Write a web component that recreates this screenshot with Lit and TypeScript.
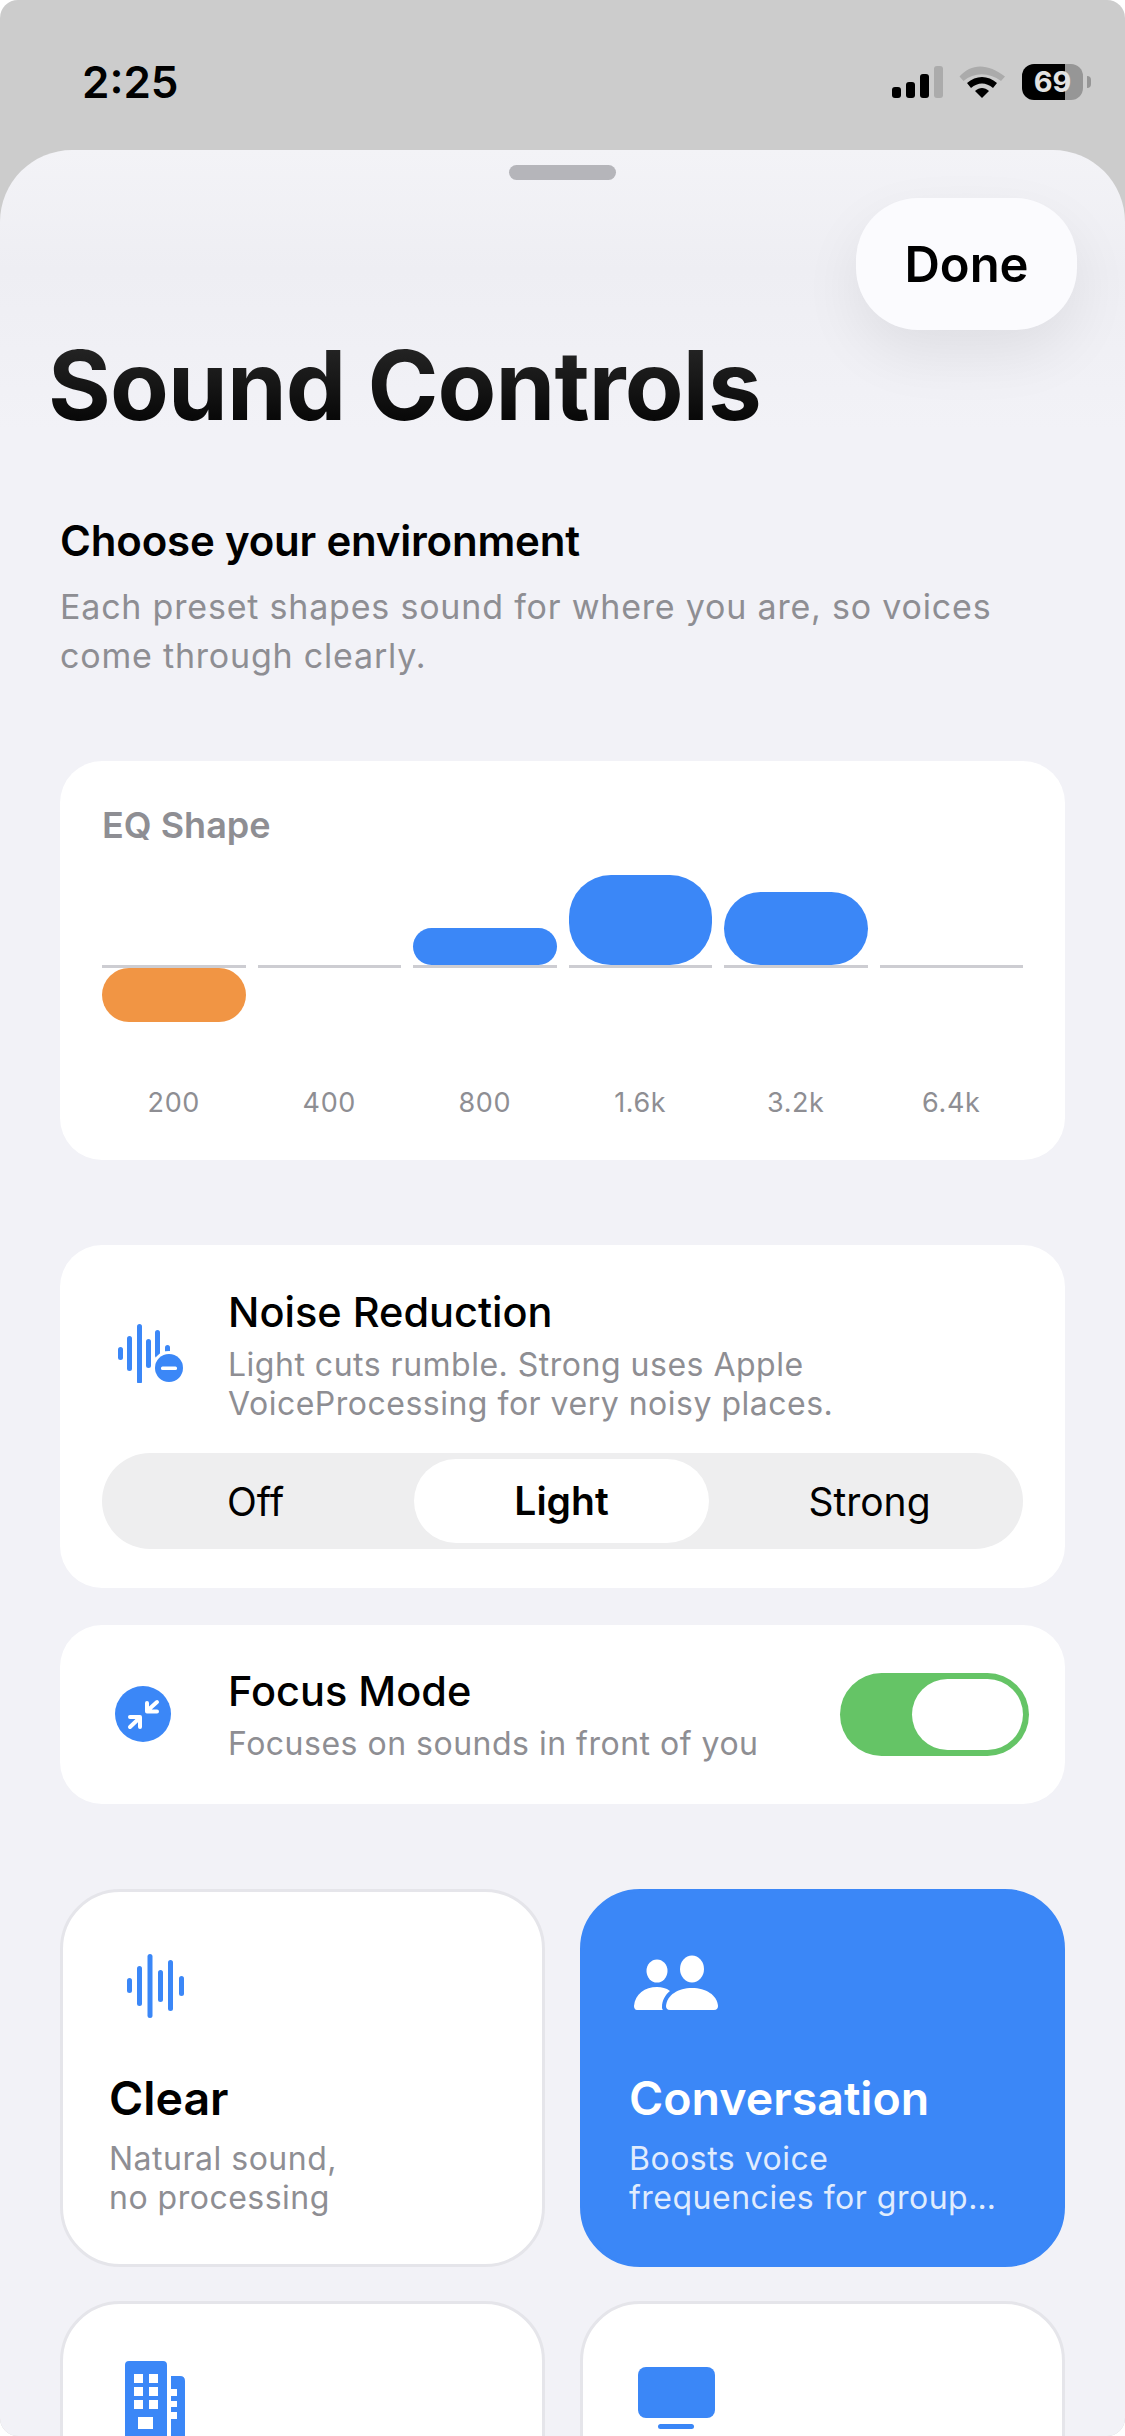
import { LitElement, html, css, svg } from "lit";
import { customElement } from "lit/decorators.js";

const EQ = [
  { label: "200", up: 0, down: 54 },
  { label: "400", up: 0, down: 0 },
  { label: "800", up: 37, down: 0 },
  { label: "1.6k", up: 90, down: 0 },
  { label: "3.2k", up: 73, down: 0 },
  { label: "6.4k", up: 0, down: 0 },
];
const bars = (list: number[][]) =>
  list.map(
    ([x, y1, y2]) => svg`<rect x=${x} y=${y1} width="5" height=${y2 - y1} rx="2.5" fill="#3b87f7"></rect>`
  );

@customElement("app-root")
export class AppRoot extends LitElement {
  static styles = css`
    :host { display: block; width: 1125px; height: 2436px; background: #fff; font-family: Inter, "Liberation Sans", sans-serif; color: #000; }
    .screen { width: 1125px; height: 2436px; border-radius: 18px; overflow: hidden; background: #cccccc; }
    .status { height: 150px; box-sizing: border-box; padding: 0 34px 0 82px; display: flex; justify-content: space-between; align-items: flex-start; }
    .time { font-size: 44px; line-height: 50px; font-weight: 600; margin-top: 57px; }
    .status-icons { display: flex; margin-top: 64px; }
    .batt { position: relative; width: 69px; height: 36px; margin-left: 16px; }
    .batt-body { width: 61px; height: 36px; border-radius: 12px; background: linear-gradient(90deg, #000 0 43px, #969696 43px); color: #e2e2e2; font-size: 29px; line-height: 36px; font-weight: 700; text-align: center; }
    .batt-nub { position: absolute; right: 0; top: 12px; width: 4px; height: 12px; border-radius: 0 6px 6px 0; background: #969696; }
    .sheet { position: relative; height: 2286px; box-sizing: border-box; background: linear-gradient(180deg, #f3f3f7 0, #eeeef3 120px, #f2f2f7 280px); border-radius: 72px 72px 0 0; padding: 15px 60px 0; }
    .handle { width: 107px; height: 15px; border-radius: 8px; background: #b5b5ba; margin: 0 auto; }
    .done { position: absolute; top: 48px; right: 48px; width: 221px; height: 132px; border-radius: 62px; background: #fbfbfe; box-shadow: 0 24px 60px rgba(0,0,0,.07); display: flex; align-items: center; justify-content: center; font-size: 49px; font-weight: 600; }
    h1 { margin: 149px 0 0 -12px; font-size: 96px; line-height: 112px; font-weight: 700; letter-spacing: -0.85px; background: linear-gradient(180deg, #2b2b2b, #000); -webkit-background-clip: text; background-clip: text; color: transparent; }
    .intro-title { margin-top: 75px; font-size: 42px; line-height: 50px; font-weight: 600; letter-spacing: -0.2px; }
    .intro { margin-top: 16px; font-size: 34px; line-height: 49px; color: #8e8e93; letter-spacing: 0.8px; }
    .card { background: #fff; border-radius: 42px; }
    .eq { margin-top: 81px; padding: 42px 42px 40px; height: 399px; box-sizing: border-box; }
    .eq-title { font-size: 36px; line-height: 44px; font-weight: 600; color: #8e8e93; }
    .eq-grid { display: grid; grid-template-columns: repeat(6, 1fr); gap: 0 12px; }
    .col { display: flex; flex-direction: column; align-items: stretch; }
    .up { height: 118px; display: flex; align-items: flex-end; }
    .down { height: 118px; }
    .line { height: 3px; background: #cdcdd2; }
    .bar { width: 100%; }
    .bar.pos { background: #3b87f7; }
    .bar.neg { background: #f19544; }
    .freq { font-size: 27px; line-height: 34px; color: #8e8e93; text-align: center; letter-spacing: .6px; }
    .noise { margin-top: 85px; height: 343px; box-sizing: border-box; padding: 42px 42px 0; }
    .row { display: flex; }
    .row-icon { width: 126px; flex: none; }
    .row-icon svg { display: block; }
    .row-title { font-size: 41.5px; line-height: 50px; font-weight: 500; }
    .row-sub { font-size: 32px; line-height: 39px; color: #8e8e93; letter-spacing: .5px; }
    .noise .row-sub { margin-top: 8px; }
    .seg { margin-top: 30px; height: 96px; border-radius: 48px; background: #eeeeef; display: grid; grid-template-columns: repeat(3, 1fr); box-sizing: border-box; align-items: center; text-align: center; font-size: 39px; }
    .seg .on { height: 84px; line-height: 84px; margin: 0 7px 0 5px; border-radius: 42px; background: #fff; font-weight: 600; }
    .focus { margin-top: 37px; height: 179px; box-sizing: border-box; padding: 41px 36px 0 42px; }
    .focus .row { align-items: flex-start; }
    .focus-text { flex: 1; }
    .focus .row-sub { margin-top: 8px; }
    .toggle { width: 189px; height: 83px; margin-top: 7px; border-radius: 42px; background: #65c466; padding: 6px; box-sizing: border-box; display: flex; justify-content: flex-end; }
    .knob { width: 111px; height: 71px; border-radius: 36px; background: #fff; }
    .presets { margin-top: 85px; display: grid; grid-template-columns: 485px 485px; gap: 34px 35px; }
    .preset { height: 378px; box-sizing: border-box; background: #fff; border: 3px solid #e5e5ea; border-radius: 60px; padding: 48px 46px 0; }
    .preset svg { display: block; }
    .preset.sel { background: #3b87f7; border-color: #3b87f7; color: #fff; }
    .p-title { margin-top: 38px; font-size: 46.5px; line-height: 56px; font-weight: 600; }
    .p-sub { margin-top: 13px; font-size: 32px; line-height: 39px; color: #8e8e93; letter-spacing: .5px; white-space: nowrap; }
    .sel .p-sub { color: rgba(255,255,255,.85); }
  `;

  render() {
    return html`<div class="screen">
      <div class="status">
        <div class="time">2:25</div>
        <div class="status-icons">
          <svg width="114" height="36" viewBox="0 0 114 36">
            <rect x="0" y="23" width="9" height="11" rx="3"></rect>
            <rect x="14" y="18" width="9" height="16" rx="3"></rect>
            <rect x="28" y="10" width="9" height="24" rx="3"></rect>
            <rect x="42" y="2" width="9" height="32" rx="3" fill="#ababab"></rect>
            <path d="M67.5 12.5C79 -1 96 -1 113 12.5L109 17C97 8 82 8 71.5 17Z" fill="#ababab"></path>
            <path d="M75 19C84 11 96 11 105 19L101 24C94 18 86 18 79 24Z"></path>
            <path d="M83 27C87.5 23 92.5 23 97 27L90 34Z"></path>
          </svg>
          <div class="batt"><div class="batt-body">69</div><div class="batt-nub"></div></div>
        </div>
      </div>
      <div class="sheet">
        <div class="handle"></div>
        <div class="done">Done</div>
        <h1>Sound Controls</h1>
        <div class="intro-title">Choose your environment</div>
        <div class="intro">Each preset shapes sound for where you are, so voices<br />come through clearly.</div>

        <div class="card eq">
          <div class="eq-title">EQ Shape</div>
          <div class="eq-grid">
            ${EQ.map(
              (b) => html`<div class="col">
                <div class="up">${b.up ? html`<div class="bar pos" style="height:${b.up}px;border-radius:${Math.min(b.up / 2, 42)}px"></div>` : ""}</div>
                <div class="line"></div>
                <div class="down">${b.down ? html`<div class="bar neg" style="height:${b.down}px;border-radius:${b.down / 2}px"></div>` : ""}</div>
                <div class="freq">${b.label}</div>
              </div>`
            )}
          </div>
        </div>

        <div class="card noise">
          <div class="row">
            <div class="row-icon">
              <svg width="90" height="100" viewBox="0 0 90 100" style="margin-top:-4px">
                <g transform="translate(-102,-1283)">
                  <rect x="118" y="1347" width="5" height="13" rx="2.5" fill="#3b87f7"></rect>
                  <rect x="127" y="1336" width="5" height="35" rx="2.5" fill="#3b87f7"></rect>
                  <rect x="137" y="1324" width="5" height="60" rx="2.5" fill="#3b87f7"></rect>
                  <rect x="146" y="1339" width="5" height="29" rx="2.5" fill="#3b87f7"></rect>
                  <rect x="155" y="1330" width="5" height="28" rx="2.5" fill="#3b87f7"></rect>
                  <rect x="165" y="1345" width="5" height="8" rx="2.5" fill="#3b87f7"></rect>
                  <circle cx="169" cy="1368" r="17" fill="#fff"></circle>
                  <circle cx="169" cy="1368" r="14" fill="#3b87f7"></circle>
                  <rect x="161" y="1366.5" width="16" height="3.5" rx="1.5" fill="#fff"></rect>
                </g>
              </svg>
            </div>
            <div>
              <div class="row-title">Noise Reduction</div>
              <div class="row-sub">Light cuts rumble. Strong uses Apple<br />VoiceProcessing for very noisy places.</div>
            </div>
          </div>
          <div class="seg"><div>Off</div><div class="on">Light</div><div>Strong</div></div>
        </div>

        <div class="card focus">
          <div class="row">
            <div class="row-icon">
              <svg width="90" height="100" viewBox="0 0 90 100">
                <g transform="translate(-102,-1666)">
                  <circle cx="143" cy="1714" r="28" fill="#3b87f7"></circle>
                  <g fill="none" stroke="#fff" stroke-width="4" stroke-linecap="round" stroke-linejoin="round">
                    <path d="M157 1702L147 1711M147 1703V1711.500H157"></path>
                    <path d="M130 1727L140 1717.500M130 1717H140V1727"></path>
                  </g>
                </g>
              </svg>
            </div>
            <div class="focus-text">
              <div class="row-title">Focus Mode</div>
              <div class="row-sub">Focuses on sounds in front of you</div>
            </div>
            <div class="toggle"><div class="knob"></div></div>
          </div>
        </div>

        <div class="presets">
          <div class="preset">
            <svg width="92" height="92" viewBox="0 0 92 92">
              <g transform="translate(-109,-1940)">
                ${bars([[127, 1978, 1993], [137, 1966, 2006], [147.5, 1954, 2018], [158, 1970, 2002], [168, 1960, 2011], [179, 1976, 1996]])}
              </g>
            </svg>
            <div class="p-title">Clear</div>
            <div class="p-sub">Natural sound,<br />no processing</div>
          </div>
          <div class="preset sel">
            <svg width="92" height="92" viewBox="0 0 92 92">
              <g transform="translate(-629,-1940)" fill="#fff">
                <ellipse cx="657" cy="1971" rx="10.500" ry="11.500"></ellipse>
                <ellipse cx="692" cy="1969" rx="12" ry="13.500"></ellipse>
                <path d="M634 2006C635 1994 645 1987 657 1987C662 1987 666 1988 670 1991C665 1995 662 2001 662 2007C662 2008 662 2009 663 2010H637C635 2010 634 2008 634 2006Z"></path>
                <path d="M666 2006C667 1995 678 1988 692 1988C706 1988 717 1995 718 2006C718 2008 717 2010 714 2010H670C667 2010 666 2008 666 2006Z"></path>
              </g>
            </svg>
            <div class="p-title">Conversation</div>
            <div class="p-sub">Boosts voice<br />frequencies for group…</div>
          </div>
          <div class="preset">
            <svg width="92" height="92" viewBox="0 0 92 92" style="overflow:visible">
              <g transform="translate(-109,-2352)">
                <path fill-rule="evenodd" fill="#3b87f7" d="M129 2361H163Q167 2361 167 2365V2440H125V2365Q125 2361 129 2361ZM134 2374V2383H143V2374ZM149 2374V2383H158V2374ZM134 2387V2396H143V2387ZM149 2387V2396H158V2387ZM134 2400V2409H143V2400ZM149 2400V2409H158V2400ZM138 2417V2429H153V2417Z"></path>
                <path fill="#3b87f7" d="M171 2376H180Q185 2376 185 2381V2440H171V2419H177V2412H171V2407H177V2401H171V2396H177V2389H171Z"></path>
              </g>
            </svg>
          </div>
          <div class="preset">
            <svg width="92" height="92" viewBox="0 0 92 92">
              <g transform="translate(-629,-2352)" fill="#3b87f7">
                <rect x="638" y="2367" width="77" height="51" rx="8"></rect>
                <rect x="658" y="2424" width="36" height="5" rx="2.500"></rect>
              </g>
            </svg>
          </div>
        </div>
      </div>
    </div>`;
  }
}
